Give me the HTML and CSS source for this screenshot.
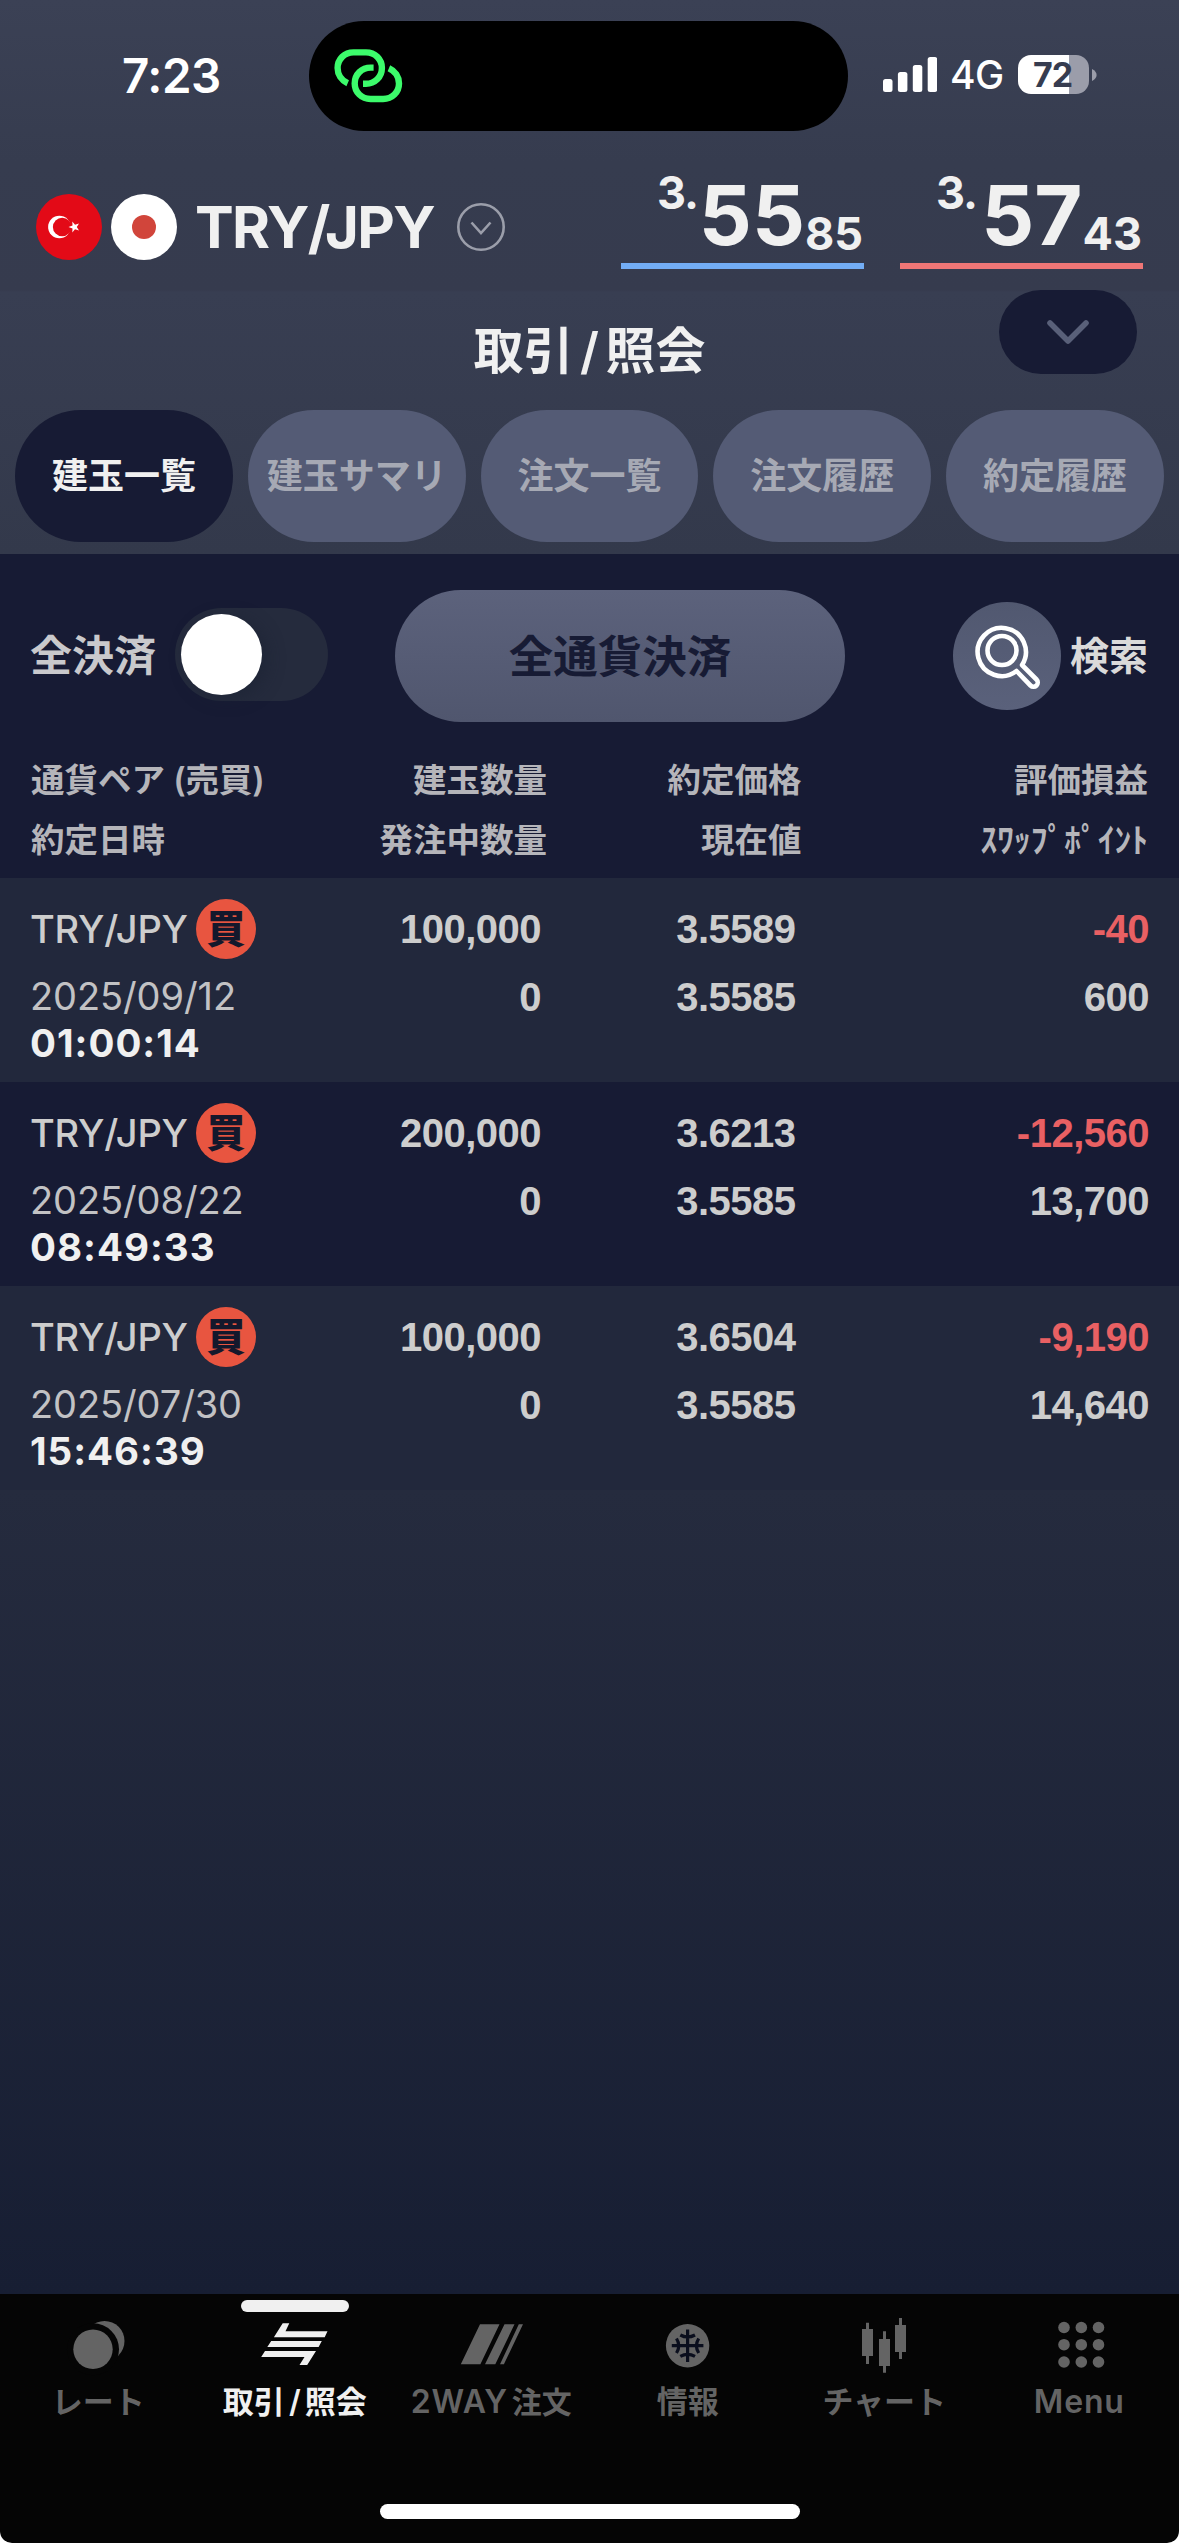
FILE: index.html
```html
<!DOCTYPE html>
<html lang="ja">
<head>
<meta charset="utf-8">
<title>取引/照会</title>
<link rel="stylesheet" href="styles.css">
</head>
<body>
<div class="screen">
  <div class="status">
    <div class="time">7:23</div>
    <div class="island">
      <svg width="84" height="70" viewBox="0 0 84 70" fill="none" stroke="#3cfb6b" stroke-width="6.4">
        <path id="link" d="M21.7 43.2C15.5 40.5 11.6 34.5 11.6 28C11.6 19.2 18.5 12.4 27.5 12.4H40C49 12.4 55.9 19.2 55.9 28C55.9 37 48.8 43.8 40 43.8H37"/>
        <use href="#link" transform="rotate(180 42.3 35.7)"/>
      </svg>
    </div>
    <div class="indicators">
      <svg width="54" height="36" viewBox="0 0 54 36" fill="#fff">
        <rect y="22" width="9.5" height="13" rx="2.5"/><rect x="14.9" y="15" width="9.5" height="20" rx="2.5"/><rect x="29.8" y="8" width="9.5" height="27" rx="2.5"/><rect x="44.7" width="9.5" height="35" rx="2.5"/>
      </svg>
      <span class="network">4G</span>
      <span class="battery">72</span>
      <svg class="battery-tip" width="5" height="12" viewBox="0 0 5 12"><path d="M0 0Q4.6 2.5 4.6 6T0 12Z" fill="#9b9daa"/></svg>
    </div>
  </div>

  <div class="quote">
    <svg class="flags" width="141" height="66" viewBox="0 0 141 66">
      <circle cx="33" cy="33" r="33" fill="#e30a17"/>
      <circle cx="23.4" cy="33" r="11.3" fill="#fff"/><circle cx="26.2" cy="33" r="9.3" fill="#e30a17"/>
      <path d="M32.5 33L36.5 31.6L36.3 27.6L39 30.8L43 29.6L40.8 33L43 36.4L39 35.2L36.3 38.4L36.5 34.4Z" fill="#fff"/>
      <circle cx="108" cy="33" r="33" fill="#fff"/><circle cx="108" cy="33" r="12" fill="#d1453b"/>
    </svg>
    <div class="pair">TRY/JPY</div>
    <svg class="pick" width="48" height="48" viewBox="0 0 48 48" fill="none" stroke="#9b9eaa" stroke-width="2.6"><circle cx="24" cy="24" r="22.7"/><path d="M14.5 19.5L24 30L33.5 19.5"/></svg>
    <div class="price bid"><span class="whole">3.</span><span class="big">55</span><span class="small">85</span></div>
    <div class="price ask"><span class="whole">3.</span><span class="big">57</span><span class="small">43</span></div>
  </div>

  <div class="heading">
    <h1>取引<span class="slash">/</span>照会</h1>
    <div class="collapse"><svg width="46" height="28" viewBox="0 0 46 28" fill="none" stroke="#596079" stroke-width="5.6" stroke-linecap="round" stroke-linejoin="round"><path d="M5 5L23 23L41 5"/></svg></div>
  </div>
  <div class="tabs">
    <div class="tab active">建玉一覧</div><div class="tab">建玉サマリ</div><div class="tab">注文一覧</div><div class="tab">注文履歴</div><div class="tab">約定履歴</div>
  </div>

  <div class="controls">
    <span class="all-label">全決済</span>
    <span class="toggle"><i class="knob"></i></span>
    <span class="close-all">全通貨決済</span>
    <span class="search">
      <svg width="108" height="108" viewBox="0 0 108 108" fill="none" stroke="#fff" stroke-width="4.6" stroke-linejoin="round">
        <path d="M63.5 69A24.1 24.1 0 1 1 69 63L83.5 77.5A4.2 4.2 0 0 1 77.5 83.5Z"/>
        <circle cx="49" cy="48.5" r="14.5"/>
      </svg>
    </span>
    <span class="search-label">検索</span>
  </div>

  <div class="thead">
    <div>通貨ペア<span class="paren"> (売買)</span><br>約定日時</div><div>建玉数量<br>発注中数量</div><div>約定価格<br>現在値</div><div>評価損益<br>ｽﾜｯﾌﾟﾎﾟｲﾝﾄ</div>
  </div>
  <div class="row">
    <div class="info"><div class="name"><span>TRY/JPY</span><span class="buy">買</span></div><div class="date">2025/09/12</div><div class="clock">01:00:14</div></div>
    <div class="num">100,000<br>0</div><div class="num">3.5589<br>3.5585</div><div class="num last"><span class="loss">-40</span><br>600</div>
  </div>
  <div class="row alt">
    <div class="info"><div class="name"><span>TRY/JPY</span><span class="buy">買</span></div><div class="date">2025/08/22</div><div class="clock">08:49:33</div></div>
    <div class="num">200,000<br>0</div><div class="num">3.6213<br>3.5585</div><div class="num last"><span class="loss">-12,560</span><br>13,700</div>
  </div>
  <div class="row">
    <div class="info"><div class="name"><span>TRY/JPY</span><span class="buy">買</span></div><div class="date">2025/07/30</div><div class="clock">15:46:39</div></div>
    <div class="num">100,000<br>0</div><div class="num">3.6504<br>3.5585</div><div class="num last"><span class="loss">-9,190</span><br>14,640</div>
  </div>
  <div class="empty"></div>

  <div class="nav-wrap">
    <div class="nav">
      <div class="item"><i class="mark"></i>
        <svg width="80" height="68" viewBox="0 0 80 68"><circle cx="46.5" cy="29" r="20" fill="#646464"/><circle cx="35" cy="37.3" r="26" fill="#050505"/><circle cx="35" cy="37.3" r="19.7" fill="#646464"/></svg>
        <span>レート</span></div>
      <div class="item active"><i class="mark"></i>
        <svg width="80" height="68" viewBox="0 0 80 68" fill="#f0f0f0"><path d="M27.7 11.3H34.3L30.5 19.3H72.5L69.7 25.3H18.9ZM16.2 29H66.8L63.6 35H12.3ZM10 39H61L52.2 53H44.5L49.5 45H6.2Z"/></svg>
        <span>取引<span class="slash">/</span>照会</span></div>
      <div class="item"><i class="mark"></i>
        <svg width="80" height="68" viewBox="0 0 80 68" fill="#646464"><path d="M29 12.3H48.5L29.4 52.3H9.8ZM53.5 12.3H63.5L44.3 52.3H34ZM67.8 12.3H72L52.9 52.3H49Z"/></svg>
        <span class="light">2WAY <b>注文</b></span></div>
      <div class="item"><i class="mark"></i>
        <svg width="80" height="68" viewBox="0 0 80 68"><circle cx="39.6" cy="33.7" r="21.7" fill="#646464"/><g fill="none" stroke="#0a0e1d" stroke-width="3.2"><path d="M39.6 17.5V50M23.8 33.7H55.4M32.3 23Q39.6 27 47 23M32.3 44.4Q39.6 40.4 47 44.4M28.5 26.5Q33 33.7 28.5 41M50.7 26.5Q46.2 33.7 50.7 41"/></g></svg>
        <span>情報</span></div>
      <div class="item"><i class="mark"></i>
        <svg width="80" height="68" viewBox="0 0 80 68" fill="#646464"><path d="M18 17H29V44H18ZM22 10.7H25V52H22ZM35 27H46V54H35ZM39 19.3H42V60.7H39ZM51 13H62V40H51ZM55 6H58V47H55Z"/></svg>
        <span>チャート</span></div>
      <div class="item"><i class="mark"></i>
        <svg width="80" height="68" viewBox="0 0 80 68" fill="#646464"><circle cx="23" cy="15.5" r="5.8"/><circle cx="40.3" cy="15.5" r="5.8"/><circle cx="57.5" cy="15.5" r="5.8"/><circle cx="23" cy="32.7" r="5.8"/><circle cx="40.3" cy="32.7" r="5.8"/><circle cx="57.5" cy="32.7" r="5.8"/><circle cx="23" cy="50" r="5.8"/><circle cx="40.3" cy="50" r="5.8"/><circle cx="57.5" cy="50" r="5.8"/></svg>
        <span class="light menu">Menu</span></div>
    </div>
    <div class="home"></div>
  </div>
</div>
</body>
</html>
```
FILE: styles.css
```css
* { box-sizing: border-box; }
body { margin: 0; background: #fff; font-family: Inter, "Noto Sans CJK JP", sans-serif; color: #f0f0f0; }
svg { display: block; flex: none; }

.screen {
  width: 1179px; height: 2543px; overflow: hidden;
  display: flex; flex-direction: column;
  background: linear-gradient(#3b4155 0, #363c4f 162px, #363b4e 290px, #383e52 292px, #33394b 554px, #252b3e 1490px, #171e33 2294px, #fff 2294px);
}
.status { height: 163px; display: flex; flex: none; }
.time { width: 309px; padding-left: 122px; font-size: 47.5px; line-height: 151px; font-weight: 600; color: #fff; letter-spacing: -.5px; }
.island { width: 539px; height: 110px; margin-top: 21px; padding: 19px 17px; border-radius: 55px; background: #000; }
.indicators { display: flex; align-items: center; height: 37px; margin: 56px 0 0 35px; color: #fff; }
.network { margin-left: 13px; width: 53px; font-size: 39px; font-weight: 500; line-height: 37px; letter-spacing: -.5px; }
.battery { margin-left: 15px; width: 71px; height: 39px; border-radius: 13px; background: linear-gradient(90deg, #fff 51px, #9b9daa 51px); color: #363c50; font-size: 34px; line-height: 39px; font-weight: 700; padding-left: 15px; letter-spacing: -1px; }
.battery-tip { margin-left: 3px; }

.quote { height: 127px; flex: none; display: flex; padding-left: 36px; }
.flags { margin-top: 31px; }
.pair { width: 280px; padding-left: 18px; font-size: 58px; font-weight: 700; line-height: 128px; white-space: nowrap; letter-spacing: -1.6px; }
.pick { margin-top: 40px; }
.price { display: flex; align-items: flex-start; width: 243px; height: 106px; border-bottom: 6px solid #73adf5; font-weight: 650; line-height: 1; margin-left: 116px; padding-left: 36px; padding-right: 1px; }
.price.ask { margin-left: 36px; border-color: #ef7676; }
.whole { font-size: 45px; margin: 7px auto 0 0; letter-spacing: -1px; }
.big { font-size: 83px; margin-top: 11px; font-weight: 700; }
.small { font-size: 45px; margin-top: 48px; letter-spacing: 0; }

.heading { height: 120px; flex: none; display: grid; grid-template-columns: 180px 1fr 180px; }
h1 { grid-column: 2; margin: 0; text-align: center; font-size: 50px; line-height: 123px; font-weight: 600; }
.slash { font-weight: 600; margin: 0 .13em; }
.collapse { width: 138px; height: 84px; border-radius: 42px; background: #171b34; display: grid; place-items: center; }
.tabs { height: 144px; flex: none; display: flex; gap: 15px; padding: 0 15px; }
.tab { flex: 1; height: 132px; border-radius: 66px; background: #545b75; color: #a6a9b4; text-align: center; font-size: 36px; line-height: 132px; font-weight: 600; white-space: nowrap; }
.tab.active { background: #171b34; color: #f0f0f0; }

.controls { height: 189px; flex: none; display: flex; align-items: flex-start; padding: 36px 31px 0 30px; background: #171b34; color: #c9c9cc; font-weight: 600; line-height: 132px; }
.all-label { width: 145px; font-size: 42px; }
.toggle { width: 153px; height: 93px; margin-top: 18px; border-radius: 47px; background: #252b3d; padding: 6px; }
.knob { display: block; width: 81px; height: 81px; border-radius: 50%; background: #fff; box-shadow: 6px 4px 16px #1b213388; }
.close-all { margin-left: 67px; width: 450px; height: 132px; border-radius: 66px; background: linear-gradient(#5c627c, #50566e); color: #171b34; text-align: center; line-height: 134px; font-size: 44.5px; }
.search { margin: 12px 0 0 108px; width: 108px; height: 108px; border-radius: 50%; background: linear-gradient(#515870, #5a617b); }
.search-label { margin-left: 9px; font-size: 39px; color: #dadada; }

.thead, .row { flex: none; display: grid; grid-template-columns: 250px 266px 254.5px 1fr; padding: 0 31px; }
.thead { height: 135px; padding-top: 7px; background: #171b34; color: #b5b5ba; font-size: 33.5px; line-height: 60px; font-weight: 600; text-align: right; white-space: nowrap; }
.thead div:first-child { text-align: left; }
.paren { letter-spacing: -.2px; }
.row { height: 204px; background: #22283c; color: #cdcdcd; }
.row.alt { background: #171b34; }
.info { padding-top: 21px; white-space: nowrap; }
.name { display: flex; font-size: 38px; line-height: 60px; font-weight: 550; letter-spacing: -.2px; }
.name > span:first-child { width: 165px; margin-left: -1px; }
.buy { width: 60px; height: 60px; margin-left: 1px; letter-spacing: 0; border-radius: 50%; background: #e85540; color: #14182c; text-align: center; font-size: 39px; font-weight: 800; }
.date { margin: 14px 0 0 -1px; font-size: 38px; line-height: 47px; color: #c2c2c4; letter-spacing: -.1px; }
.clock { margin-left: -1px; font-size: 38.5px; line-height: 47px; font-weight: 650; color: #f0f0f0; letter-spacing: 1px; }
.num { padding: 17px 6px 0 0; text-align: right; font: bold 40px/68px "Liberation Sans", sans-serif; letter-spacing: -.5px; }
.num.last { padding-right: 0; margin-right: -1px; }
.loss { color: #e96063; }
.empty { flex: 1; }

.nav-wrap { height: 249px; flex: none; background: #050505; border-radius: 0 0 12px 12px; }
.nav { display: grid; grid-template-columns: repeat(6, 1fr); height: 210px; padding-top: 6px; }
.item { display: flex; flex-direction: column; align-items: center; color: #646464; font-size: 31px; line-height: 40px; font-weight: 600; white-space: nowrap; }
.item.active { color: #f0f0f0; }
.mark { width: 108px; height: 12px; border-radius: 6px; }
.active .mark { background: #f0f0f0; }
.item > span { margin-top: 2px; }
.light { font-weight: 580; letter-spacing: .8px; font-size: 32px; }
.menu { margin-left: -3px; }
.light b { font-weight: 600; font-size: 30px; letter-spacing: 0; margin-left: -5px; }
.home { width: 420px; height: 15px; border-radius: 8px; background: #fff; margin: 0 auto; }
```
